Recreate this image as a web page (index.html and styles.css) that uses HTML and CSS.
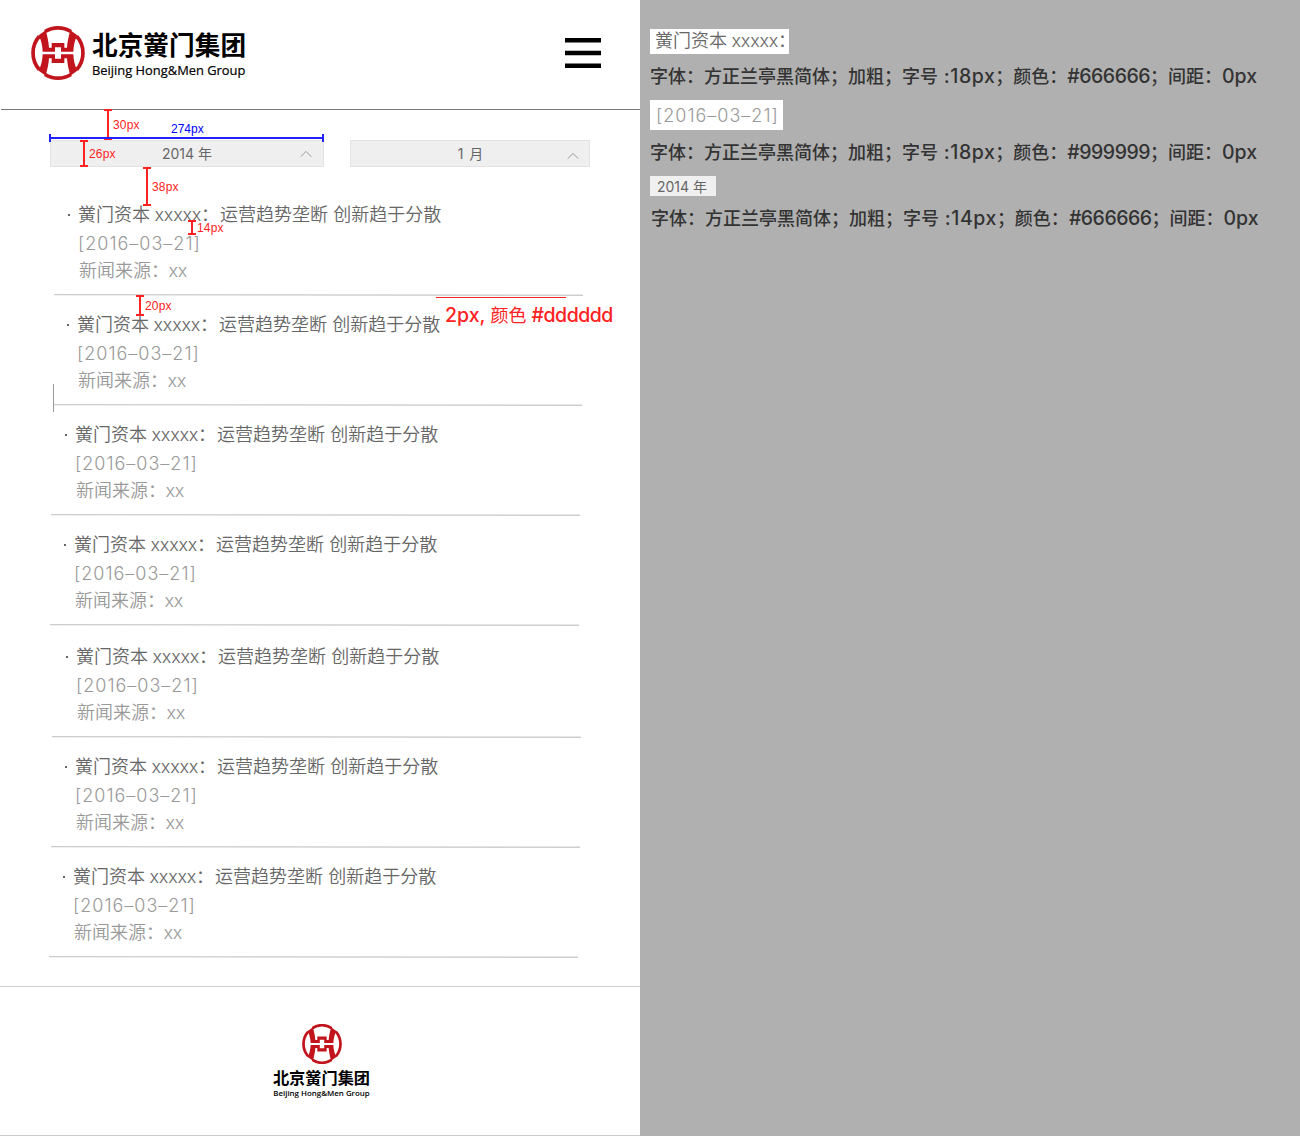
FILE: index.html
```html
<!DOCTYPE html>
<html lang="zh-CN">
<head>
<meta charset="utf-8">
<title>北京黉门集团</title>
<link rel="stylesheet" href="styles.css">
</head>
<body>
<svg class="defs" width="0" height="0" aria-hidden="true">
  <symbol id="emblem" viewBox="0 0 162 162">
    <g fill="none" stroke="#c1141c">
      <path stroke-width="11" d="M42 16.500A75.500 75.500 0 0 1 120 16.500M42 145.500A75.500 75.500 0 0 0 120 145.500M25 31A75.500 75.500 0 0 0 25 131M137 31A75.500 75.500 0 0 1 137 131"/>
    </g>
    <g fill="#c1141c">
      <path d="M23 28L44 13C50 34 53 50 54 65H62V51H100V65H108C109 50 112 34 118 13L139 28C130 46 128 60 127 77H90V64H72V77H35C34 60 32 46 23 28Z"/>
      <path d="M23 134L44 149C50 128 53 112 54 97H62V111H100V97H108C109 112 112 128 118 149L139 134C130 116 128 102 127 85H90V98H72V85H35C34 102 32 116 23 134Z"/>
    </g>
  </symbol>
</svg>
<div class="board">
  <main class="page">
    <header class="header">
      <a class="brand">
        <svg class="brand-mark"><use href="#emblem"/></svg>
        <span class="brand-name"><b class="brand-cn">北京黉门集团</b><span class="brand-en">Beijing Hong&amp;Men Group</span></span>
      </a>
      <svg class="menu" viewBox="0 0 36 30"><path d="M0 0H36V4.400H0zM0 12.800H36V17.200H0zM0 25.600H36V30H0z"/></svg>
    </header>
    <div class="filters">
      <div class="select year"><span>2014 年</span><svg class="caret" viewBox="0 0 12 8"><path d="M.7 6.700L6 1.400l5.300 5.300"/></svg></div>
      <div class="select month"><span>1 月</span><svg class="caret" viewBox="0 0 12 8"><path d="M.7 6.700L6 1.400l5.300 5.300"/></svg></div>
    </div>
    <ul class="news">
      <li style="margin-left:54px"><h3>黉门资本 <span class="x">xxxxx</span>：<span class="t">运营趋势垄断 创新趋于分散</span></h3><time>[2016–03–21]</time><p>新闻来源：<span class="x">xx</span></p></li>
      <li style="margin-left:53px"><h3>黉门资本 <span class="x">xxxxx</span>：<span class="t">运营趋势垄断 创新趋于分散</span></h3><time>[2016–03–21]</time><p>新闻来源：<span class="x">xx</span></p></li>
      <li style="margin-left:51px"><h3>黉门资本 <span class="x">xxxxx</span>：<span class="t">运营趋势垄断 创新趋于分散</span></h3><time>[2016–03–21]</time><p>新闻来源：<span class="x">xx</span></p></li>
      <li style="margin-left:50px"><h3>黉门资本 <span class="x">xxxxx</span>：<span class="t">运营趋势垄断 创新趋于分散</span></h3><time>[2016–03–21]</time><p>新闻来源：<span class="x">xx</span></p></li>
      <li class="group" style="margin-left:52px"><h3>黉门资本 <span class="x">xxxxx</span>：<span class="t">运营趋势垄断 创新趋于分散</span></h3><time>[2016–03–21]</time><p>新闻来源：<span class="x">xx</span></p></li>
      <li style="margin-left:51px"><h3>黉门资本 <span class="x">xxxxx</span>：<span class="t">运营趋势垄断 创新趋于分散</span></h3><time>[2016–03–21]</time><p>新闻来源：<span class="x">xx</span></p></li>
      <li style="margin-left:49px"><h3>黉门资本 <span class="x">xxxxx</span>：<span class="t">运营趋势垄断 创新趋于分散</span></h3><time>[2016–03–21]</time><p>新闻来源：<span class="x">xx</span></p></li>
    </ul>
    <footer class="footer">
      <svg class="foot-mark"><use href="#emblem"/></svg>
      <b class="foot-cn">北京黉门集团</b>
      <span class="foot-en">Beijing Hong&amp;Men Group</span>
    </footer>

    <div class="dim v d30"><span>30px</span></div>
    <div class="dim v d26"><span>26px</span></div>
    <div class="dim v d38"><span>38px</span></div>
    <div class="dim v d14"><span>14px</span></div>
    <div class="dim v d20"><span>20px</span></div>
    <div class="dim h d274"><span>274px</span></div>
    <div class="rule-note"><span class="n">2px,</span> 颜色 <span class="n hex">#dddddd</span></div>
    <div class="guide"></div>
  </main>
  <aside class="notes">
    <div class="chip c1">黉门资本 <span class="x">xxxxx</span>：</div>
    <p class="spec s1">字体：方正兰亭黑简体；加粗；字号 <span class="n size">:18px</span>；颜色：<span class="n hex">#666666</span>；间距：<span class="n">0px</span></p>
    <div class="chip c2">[2016–03–21]</div>
    <p class="spec s2">字体：方正兰亭黑简体；加粗；字号 <span class="n size">:18px</span>；颜色：<span class="n hex">#999999</span>；间距：<span class="n">0px</span></p>
    <div class="chip c3">2014 年</div>
    <p class="spec s3">字体：方正兰亭黑简体；加粗；字号 <span class="n size">:14px</span>；颜色：<span class="n hex">#666666</span>；间距：<span class="n">0px</span></p>
  </aside>
</div>
</body>
</html>
```
FILE: styles.css
```css
* { box-sizing: border-box; margin: 0; padding: 0; }
body { width: 1300px; height: 1136px; font-family: Inter, "Noto Sans CJK SC", sans-serif; overflow: hidden; }
.defs { position: absolute; }
.board { display: flex; height: 1136px; background: #b0b0b0; }
.page { position: relative; width: 640px; background: #fff; display: flex; flex-direction: column; border-bottom: 1px solid #ccc; }

.header { height: 110px; margin-left: 1px; padding: 0 39px 0 30px; display: flex; justify-content: space-between; border-bottom: 1px solid #777; }
.brand { display: flex; gap: 7px; padding-top: 26px; }
.brand-mark { width: 54px; height: 54px; }
.brand-name { display: flex; flex-direction: column; color: #000; white-space: nowrap; }
.brand-cn { font: 700 25.700px/36px "Noto Sans CJK SC", sans-serif; }
.brand-en { font: 500 12.900px/16px "Open Sans", sans-serif; -webkit-text-stroke: .2px #000; }
.menu { width: 36px; height: 30px; margin-top: 38px; }

.filters { display: flex; gap: 26px; padding: 30px 0 0 50px; }
.select { position: relative; height: 27px; border: 1px solid #e3e3e3; background: #efefef; color: #666; font-size: 14px; line-height: 26px; display: flex; align-items: center; justify-content: center; }
.year { width: 274px; }
.month { width: 240px; word-spacing: 2px; padding-left: 1px; }
.caret { position: absolute; right: 11px; top: 9px; width: 12px; height: 8px; fill: none; stroke: #999; stroke-width: 1; }
.month .caret { right: 10px; top: 11px; }

.news { list-style: none; padding-top: 19px; font-size: 18px; white-space: nowrap; font-weight: 350; }
.news li { position: relative; width: 529px; height: 110px; padding: 15px 0 0 24px; color: #999; }
.news .group { margin-top: 2px; }
.news li::before { content: ""; position: absolute; left: 14px; top: 28px; width: 2px; height: 2px; background: #666; }
.news li::after { content: ""; position: absolute; left: 0; right: 0; bottom: 0; height: 2px; background: linear-gradient(90deg, #ccc, #e8e8e8) 0 0/100% 1px no-repeat, linear-gradient(90deg, #f2f2f2, #ccc) 0 1px/100% 1px no-repeat; }
.news h3 { font-size: 18px; font-weight: 350; line-height: 28px; color: #666; height: 28px; }
.x { letter-spacing: -.25px; margin-left: -.5px; }
.t { margin-left: 1px; }
.news time { display: block; height: 29px; line-height: 30px; letter-spacing: 1px; }
.news p { height: 26px; line-height: 26px; padding-left: 1px; }

.footer { height: 149px; margin-top: 28px; border-top: 1px solid #d3d3d3; padding: 37px 0 0 3px; display: flex; flex-direction: column; align-items: center; color: #000; }
.foot-mark { width: 40px; height: 40px; }
.foot-cn { font: 700 16.200px/22px "Noto Sans CJK SC", sans-serif; margin-top: 2px; }
.foot-en { font: 600 7.900px/10px "Open Sans", sans-serif; }

.dim { position: absolute; color: #f22; font: 12px/12px "Liberation Sans", sans-serif; }
.v { width: 8px; border: solid #f22; border-width: 2px 0; }
.v::before { content: ""; position: absolute; left: 3px; top: -1px; bottom: -1px; width: 2px; background: #f22; }
.dim span { position: absolute; left: 9px; top: 50%; transform: translateY(-50%); letter-spacing: .2px; }
.d30 { left: 104px; top: 109px; height: 31px; }
.d26 { left: 80px; top: 140px; height: 27px; }
.d38 { left: 143px; top: 167px; height: 39px; }
.d14 { left: 188px; top: 220px; height: 15px; }
.d20 { left: 136px; top: 295px; height: 21px; }
.h { left: 49px; top: 134px; width: 275px; height: 8px; color: #00f; border: solid #22f; border-width: 0 2px; }
.h::before { content: ""; position: absolute; left: 0; right: 0; top: 3px; height: 2px; background: #22f; }
.dim.h span { left: 120px; top: -5px; letter-spacing: 0; }
.rule-note { position: absolute; left: 436px; top: 297px; padding-left: 9px; white-space: nowrap; color: #f22; font-size: 18px; line-height: 36px; }
.rule-note::before { content: ""; position: absolute; left: 0; top: 0; width: 130px; height: 1px; background: #f22; }
.n { font-size: 19.500px; font-weight: 500; }
.hex { letter-spacing: -.5px; }
.size { margin-left: 1px; letter-spacing: .55px; }
.guide { position: absolute; left: 53px; top: 384px; width: 1px; height: 28px; background: #999; }

.notes { display: flex; flex-direction: column; align-items: flex-start; padding: 29px 0 0 10px; white-space: nowrap; }
.chip { background: #fff; font-size: 18px; font-weight: 350; color: #666; padding-left: 5px; }
.c1 { width: 139px; height: 25px; line-height: 24px; }
.c2 { width: 133px; height: 30px; line-height: 32px; color: #999; padding-left: 6px; letter-spacing: 1px; }
.c3 { width: 66px; height: 20px; line-height: 22px; background: #f0f0f0; font-size: 14px; font-weight: 400; padding-left: 7px; }
.spec { height: 46px; line-height: 44px; font-size: 18px; font-weight: 500; color: #333; }
.s3 { padding-left: 1px; }
```
